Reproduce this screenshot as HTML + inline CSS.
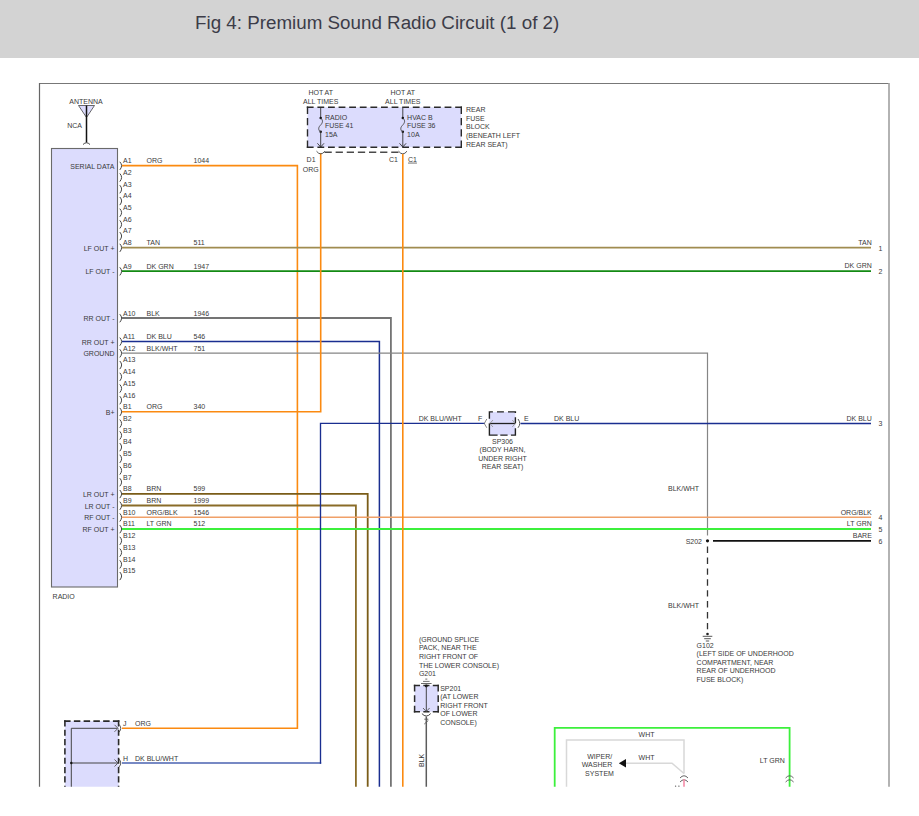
<!DOCTYPE html>
<html><head><meta charset="utf-8"><style>
html,body{margin:0;padding:0;background:#fff;width:919px;height:816px;overflow:hidden}
#hdr{position:absolute;left:0;top:0;width:919px;height:58px;background:#d3d3d3}
#hdr span{position:absolute;left:195px;top:12px;font-family:"Liberation Sans",sans-serif;font-size:18.8px;color:#3c3c48;white-space:nowrap}
svg{position:absolute;left:0;top:0}
text{font-family:"Liberation Sans",sans-serif}
</style></head><body>
<div id="hdr"><span>Fig 4: Premium Sound Radio Circuit (1 of 2)</span></div>
<svg width="919" height="816" viewBox="0 0 919 816">
<defs><clipPath id="c"><rect x="0" y="60" width="919" height="726.8"/></clipPath></defs>
<g clip-path="url(#c)">
<line x1="39.5" y1="83.5" x2="889.0" y2="83.5" stroke="#777" stroke-width="1.2" />
<line x1="39.5" y1="83.0" x2="39.5" y2="787.0" stroke="#666" stroke-width="1.2" />
<line x1="889.0" y1="82.9" x2="889.0" y2="787.0" stroke="#a6a6a6" stroke-width="1.7" />
<text x="86.0" y="104.0" text-anchor="middle" font-size="7" fill="#3a3a3a" >ANTENNA</text>
<text x="82.0" y="127.6" text-anchor="end" font-size="7" fill="#3a3a3a" >NCA</text>
<path d="M78.5,105.5 L94.5,105.5 L86.5,117.5 Z" stroke="#444" stroke-width="0.8" fill="#dcdcfd" />
<line x1="86.5" y1="105.5" x2="86.5" y2="142.5" stroke="#111" stroke-width="1.5" />
<path d="M83,144.5 Q86.5,141 90,144.5" stroke="#333" stroke-width="0.9" fill="none" />
<rect x="51.5" y="148.5" width="66" height="438.5" fill="#dcdcfd" stroke="#6a6a6a" stroke-width="1.1"/>
<text x="52.6" y="598.6" text-anchor="start" font-size="7" fill="#3a3a3a" >RADIO</text>
<path d="M119.8,161.8 Q123.4,165.6 119.8,169.9" stroke="#444" stroke-width="1.0" fill="none" />
<text x="123.0" y="163.1" text-anchor="start" font-size="7" fill="#3a3a3a" >A1</text>
<text x="114.5" y="168.6" text-anchor="end" font-size="7" fill="#3a3a3a" >SERIAL DATA</text>
<path d="M119.8,173.5 Q123.4,177.3 119.8,181.6" stroke="#444" stroke-width="1.0" fill="none" />
<text x="123.0" y="174.8" text-anchor="start" font-size="7" fill="#3a3a3a" >A2</text>
<path d="M119.8,185.2 Q123.4,189.0 119.8,193.3" stroke="#444" stroke-width="1.0" fill="none" />
<text x="123.0" y="186.5" text-anchor="start" font-size="7" fill="#3a3a3a" >A3</text>
<path d="M119.8,197.0 Q123.4,200.8 119.8,205.1" stroke="#444" stroke-width="1.0" fill="none" />
<text x="123.0" y="198.3" text-anchor="start" font-size="7" fill="#3a3a3a" >A4</text>
<path d="M119.8,208.7 Q123.4,212.5 119.8,216.8" stroke="#444" stroke-width="1.0" fill="none" />
<text x="123.0" y="210.0" text-anchor="start" font-size="7" fill="#3a3a3a" >A5</text>
<path d="M119.8,220.4 Q123.4,224.2 119.8,228.5" stroke="#444" stroke-width="1.0" fill="none" />
<text x="123.0" y="221.7" text-anchor="start" font-size="7" fill="#3a3a3a" >A6</text>
<path d="M119.8,232.1 Q123.4,235.9 119.8,240.2" stroke="#444" stroke-width="1.0" fill="none" />
<text x="123.0" y="233.4" text-anchor="start" font-size="7" fill="#3a3a3a" >A7</text>
<path d="M119.8,243.8 Q123.4,247.6 119.8,251.9" stroke="#444" stroke-width="1.0" fill="none" />
<text x="123.0" y="245.1" text-anchor="start" font-size="7" fill="#3a3a3a" >A8</text>
<text x="114.5" y="250.6" text-anchor="end" font-size="7" fill="#3a3a3a" >LF OUT +</text>
<path d="M119.8,267.3 Q123.4,271.1 119.8,275.4" stroke="#444" stroke-width="1.0" fill="none" />
<text x="123.0" y="268.6" text-anchor="start" font-size="7" fill="#3a3a3a" >A9</text>
<text x="114.5" y="274.1" text-anchor="end" font-size="7" fill="#3a3a3a" >LF OUT -</text>
<path d="M119.8,314.2 Q123.4,318.0 119.8,322.3" stroke="#444" stroke-width="1.0" fill="none" />
<text x="123.0" y="315.5" text-anchor="start" font-size="7" fill="#3a3a3a" >A10</text>
<text x="114.5" y="321.0" text-anchor="end" font-size="7" fill="#3a3a3a" >RR OUT -</text>
<path d="M119.8,337.6 Q123.4,341.4 119.8,345.7" stroke="#444" stroke-width="1.0" fill="none" />
<text x="123.0" y="338.9" text-anchor="start" font-size="7" fill="#3a3a3a" >A11</text>
<text x="114.5" y="345.0" text-anchor="end" font-size="7" fill="#3a3a3a" >RR OUT +</text>
<path d="M119.8,349.3 Q123.4,353.1 119.8,357.4" stroke="#444" stroke-width="1.0" fill="none" />
<text x="123.0" y="350.6" text-anchor="start" font-size="7" fill="#3a3a3a" >A12</text>
<text x="114.5" y="356.1" text-anchor="end" font-size="7" fill="#3a3a3a" >GROUND</text>
<path d="M119.8,361.0 Q123.4,364.8 119.8,369.1" stroke="#444" stroke-width="1.0" fill="none" />
<text x="123.0" y="362.3" text-anchor="start" font-size="7" fill="#3a3a3a" >A13</text>
<path d="M119.8,372.8 Q123.4,376.6 119.8,380.9" stroke="#444" stroke-width="1.0" fill="none" />
<text x="123.0" y="374.1" text-anchor="start" font-size="7" fill="#3a3a3a" >A14</text>
<path d="M119.8,384.5 Q123.4,388.3 119.8,392.6" stroke="#444" stroke-width="1.0" fill="none" />
<text x="123.0" y="385.8" text-anchor="start" font-size="7" fill="#3a3a3a" >A15</text>
<path d="M119.8,396.2 Q123.4,400.0 119.8,404.3" stroke="#444" stroke-width="1.0" fill="none" />
<text x="123.0" y="397.5" text-anchor="start" font-size="7" fill="#3a3a3a" >A16</text>
<path d="M119.8,407.9 Q123.4,411.7 119.8,416.0" stroke="#444" stroke-width="1.0" fill="none" />
<text x="123.0" y="409.2" text-anchor="start" font-size="7" fill="#3a3a3a" >B1</text>
<text x="114.5" y="414.7" text-anchor="end" font-size="7" fill="#3a3a3a" >B+</text>
<path d="M119.8,419.6 Q123.4,423.4 119.8,427.7" stroke="#444" stroke-width="1.0" fill="none" />
<text x="123.0" y="420.9" text-anchor="start" font-size="7" fill="#3a3a3a" >B2</text>
<path d="M119.8,431.4 Q123.4,435.2 119.8,439.5" stroke="#444" stroke-width="1.0" fill="none" />
<text x="123.0" y="432.7" text-anchor="start" font-size="7" fill="#3a3a3a" >B3</text>
<path d="M119.8,443.1 Q123.4,446.9 119.8,451.2" stroke="#444" stroke-width="1.0" fill="none" />
<text x="123.0" y="444.4" text-anchor="start" font-size="7" fill="#3a3a3a" >B4</text>
<path d="M119.8,454.8 Q123.4,458.6 119.8,462.9" stroke="#444" stroke-width="1.0" fill="none" />
<text x="123.0" y="456.1" text-anchor="start" font-size="7" fill="#3a3a3a" >B5</text>
<path d="M119.8,466.5 Q123.4,470.3 119.8,474.6" stroke="#444" stroke-width="1.0" fill="none" />
<text x="123.0" y="467.8" text-anchor="start" font-size="7" fill="#3a3a3a" >B6</text>
<path d="M119.8,478.2 Q123.4,482.0 119.8,486.3" stroke="#444" stroke-width="1.0" fill="none" />
<text x="123.0" y="479.5" text-anchor="start" font-size="7" fill="#3a3a3a" >B7</text>
<path d="M119.8,490.0 Q123.4,493.8 119.8,498.1" stroke="#444" stroke-width="1.0" fill="none" />
<text x="123.0" y="491.3" text-anchor="start" font-size="7" fill="#3a3a3a" >B8</text>
<text x="114.5" y="496.8" text-anchor="end" font-size="7" fill="#3a3a3a" >LR OUT +</text>
<path d="M119.8,501.7 Q123.4,505.5 119.8,509.8" stroke="#444" stroke-width="1.0" fill="none" />
<text x="123.0" y="503.0" text-anchor="start" font-size="7" fill="#3a3a3a" >B9</text>
<text x="114.5" y="508.5" text-anchor="end" font-size="7" fill="#3a3a3a" >LR OUT -</text>
<path d="M119.8,513.4 Q123.4,517.2 119.8,521.5" stroke="#444" stroke-width="1.0" fill="none" />
<text x="123.0" y="514.7" text-anchor="start" font-size="7" fill="#3a3a3a" >B10</text>
<text x="114.5" y="520.2" text-anchor="end" font-size="7" fill="#3a3a3a" >RF OUT -</text>
<path d="M119.8,525.1 Q123.4,528.9 119.8,533.2" stroke="#444" stroke-width="1.0" fill="none" />
<text x="123.0" y="526.4" text-anchor="start" font-size="7" fill="#3a3a3a" >B11</text>
<text x="114.5" y="531.9" text-anchor="end" font-size="7" fill="#3a3a3a" >RF OUT +</text>
<path d="M119.8,536.8 Q123.4,540.6 119.8,544.9" stroke="#444" stroke-width="1.0" fill="none" />
<text x="123.0" y="538.1" text-anchor="start" font-size="7" fill="#3a3a3a" >B12</text>
<path d="M119.8,548.6 Q123.4,552.4 119.8,556.7" stroke="#444" stroke-width="1.0" fill="none" />
<text x="123.0" y="549.9" text-anchor="start" font-size="7" fill="#3a3a3a" >B13</text>
<path d="M119.8,560.3 Q123.4,564.1 119.8,568.4" stroke="#444" stroke-width="1.0" fill="none" />
<text x="123.0" y="561.6" text-anchor="start" font-size="7" fill="#3a3a3a" >B14</text>
<path d="M119.8,572.0 Q123.4,575.8 119.8,580.1" stroke="#444" stroke-width="1.0" fill="none" />
<text x="123.0" y="573.3" text-anchor="start" font-size="7" fill="#3a3a3a" >B15</text>
<text x="146.5" y="163.1" text-anchor="start" font-size="7" fill="#3a3a3a" >ORG</text>
<text x="193.5" y="163.1" text-anchor="start" font-size="7" fill="#3a3a3a" >1044</text>
<text x="146.5" y="245.1" text-anchor="start" font-size="7" fill="#3a3a3a" >TAN</text>
<text x="193.5" y="245.1" text-anchor="start" font-size="7" fill="#3a3a3a" >511</text>
<text x="146.5" y="268.6" text-anchor="start" font-size="7" fill="#3a3a3a" >DK GRN</text>
<text x="193.5" y="268.6" text-anchor="start" font-size="7" fill="#3a3a3a" >1947</text>
<text x="146.5" y="315.5" text-anchor="start" font-size="7" fill="#3a3a3a" >BLK</text>
<text x="193.5" y="315.5" text-anchor="start" font-size="7" fill="#3a3a3a" >1946</text>
<text x="146.5" y="338.9" text-anchor="start" font-size="7" fill="#3a3a3a" >DK BLU</text>
<text x="193.5" y="338.9" text-anchor="start" font-size="7" fill="#3a3a3a" >546</text>
<text x="146.5" y="350.6" text-anchor="start" font-size="7" fill="#3a3a3a" >BLK/WHT</text>
<text x="193.5" y="350.6" text-anchor="start" font-size="7" fill="#3a3a3a" >751</text>
<text x="146.5" y="409.2" text-anchor="start" font-size="7" fill="#3a3a3a" >ORG</text>
<text x="193.5" y="409.2" text-anchor="start" font-size="7" fill="#3a3a3a" >340</text>
<text x="146.5" y="491.3" text-anchor="start" font-size="7" fill="#3a3a3a" >BRN</text>
<text x="193.5" y="491.3" text-anchor="start" font-size="7" fill="#3a3a3a" >599</text>
<text x="146.5" y="503.0" text-anchor="start" font-size="7" fill="#3a3a3a" >BRN</text>
<text x="193.5" y="503.0" text-anchor="start" font-size="7" fill="#3a3a3a" >1999</text>
<text x="146.5" y="514.7" text-anchor="start" font-size="7" fill="#3a3a3a" >ORG/BLK</text>
<text x="193.5" y="514.7" text-anchor="start" font-size="7" fill="#3a3a3a" >1546</text>
<text x="146.5" y="526.4" text-anchor="start" font-size="7" fill="#3a3a3a" >LT GRN</text>
<text x="193.5" y="526.4" text-anchor="start" font-size="7" fill="#3a3a3a" >512</text>
<path d="M122,165.6 H297.4 V728.3 H122" stroke="#fb8a10" stroke-width="1.6" fill="none" />
<line x1="122.0" y1="247.6" x2="871.0" y2="247.6" stroke="#a08c50" stroke-width="1.6" />
<line x1="122.0" y1="271.1" x2="871.0" y2="271.1" stroke="#138a13" stroke-width="1.8" />
<path d="M122,318.0 H390.9 V787" stroke="#747474" stroke-width="1.8" fill="none" />
<path d="M122,341.4 H379.4 V787" stroke="#1a2e90" stroke-width="1.5" fill="none" />
<path d="M122,353.1 H707.5 V535.5" stroke="#858585" stroke-width="1.2" fill="none" />
<path d="M122,411.7 H320.7 V153" stroke="#fb8a10" stroke-width="1.6" fill="none" />
<path d="M122,493.8 H367.7 V787" stroke="#7a5c18" stroke-width="1.8" fill="none" />
<path d="M122,505.5 H355.9 V787" stroke="#8a6c28" stroke-width="1.8" fill="none" />
<line x1="122.0" y1="517.2" x2="871.0" y2="517.2" stroke="#f0a068" stroke-width="1.5" />
<line x1="122.0" y1="528.9" x2="871.0" y2="528.9" stroke="#3cf03c" stroke-width="2" />
<line x1="713.0" y1="540.8" x2="871.0" y2="540.8" stroke="#111" stroke-width="1.8" />
<circle cx="707.5" cy="540.8" r="1.6" fill="#111"/>
<text x="702.0" y="543.5" text-anchor="end" font-size="7" fill="#3a3a3a" >S202</text>
<text x="668.0" y="490.6" text-anchor="start" font-size="7" fill="#3a3a3a" >BLK/WHT</text>
<text x="668.0" y="607.9" text-anchor="start" font-size="7" fill="#3a3a3a" >BLK/WHT</text>
<line x1="707.5" y1="546.6" x2="707.5" y2="630.0" stroke="#333" stroke-width="1.3" stroke-dasharray="6.4 4.5"/>
<circle cx="707.5" cy="634" r="1.3" fill="#222"/>
<line x1="702.7" y1="636.3" x2="712.3" y2="636.3" stroke="#444" stroke-width="0.9" />
<line x1="704.2" y1="638.7" x2="710.8" y2="638.7" stroke="#444" stroke-width="0.9" />
<line x1="705.8" y1="641.0" x2="709.2" y2="641.0" stroke="#444" stroke-width="0.9" />
<text x="696.6" y="647.6" text-anchor="start" font-size="7" fill="#3a3a3a" >G102</text>
<text x="696.6" y="656.1" text-anchor="start" font-size="7" fill="#3a3a3a" >(LEFT SIDE OF UNDERHOOD</text>
<text x="696.6" y="664.6" text-anchor="start" font-size="7" fill="#3a3a3a" >COMPARTMENT, NEAR</text>
<text x="696.6" y="673.1" text-anchor="start" font-size="7" fill="#3a3a3a" >REAR OF UNDERHOOD</text>
<text x="696.6" y="681.6" text-anchor="start" font-size="7" fill="#3a3a3a" >FUSE BLOCK)</text>
<text x="871.8" y="244.9" text-anchor="end" font-size="7" fill="#3a3a3a" >TAN</text>
<text x="878.5" y="250.6" text-anchor="start" font-size="7" fill="#3a3a3a" >1</text>
<text x="871.8" y="268.4" text-anchor="end" font-size="7" fill="#3a3a3a" >DK GRN</text>
<text x="878.5" y="274.1" text-anchor="start" font-size="7" fill="#3a3a3a" >2</text>
<text x="871.8" y="420.6" text-anchor="end" font-size="7" fill="#3a3a3a" >DK BLU</text>
<text x="878.5" y="426.3" text-anchor="start" font-size="7" fill="#3a3a3a" >3</text>
<text x="871.8" y="514.5" text-anchor="end" font-size="7" fill="#3a3a3a" >ORG/BLK</text>
<text x="878.5" y="520.2" text-anchor="start" font-size="7" fill="#3a3a3a" >4</text>
<text x="871.8" y="526.2" text-anchor="end" font-size="7" fill="#3a3a3a" >LT GRN</text>
<text x="878.5" y="531.9" text-anchor="start" font-size="7" fill="#3a3a3a" >5</text>
<text x="871.8" y="538.1" text-anchor="end" font-size="7" fill="#3a3a3a" >BARE</text>
<text x="878.5" y="543.8" text-anchor="start" font-size="7" fill="#3a3a3a" >6</text>
<line x1="122.0" y1="763.0" x2="321.2" y2="763.0" stroke="#4a62b0" stroke-width="1.6" />
<path d="M320.5,763.8 V423.4 H485" stroke="#1a2e90" stroke-width="1.35" fill="none" />
<line x1="520.5" y1="423.4" x2="871.0" y2="423.4" stroke="#1a2e90" stroke-width="1.5" />
<text x="418.7" y="420.5" text-anchor="start" font-size="7" fill="#3a3a3a" >DK BLU/WHT</text>
<text x="554.0" y="420.5" text-anchor="start" font-size="7" fill="#3a3a3a" >DK BLU</text>
<text x="477.9" y="420.5" text-anchor="start" font-size="7" fill="#3a3a3a" >F</text>
<text x="524.0" y="420.5" text-anchor="start" font-size="7" fill="#3a3a3a" >E</text>
<rect x="489.4" y="411.9" width="26" height="23.2" fill="#dcdcfd"/>
<path d="M488.7,411.9H492.9M497,411.9H503.9M508,411.9H516.1M515.4,411.2V413M515.4,417.3V423.3M515.4,428.3V435.8M488.7,435.1H497.6M500.3,435.1H507.6M510.9,435.1H516.1M489.4,411.2V418.8M489.4,423.3V435.8" stroke="#222" stroke-width="1.4" fill="none"/>
<line x1="489.4" y1="423.5" x2="515.4" y2="423.5" stroke="#222" stroke-width="1.3" />
<path d="M493,420 L489.8,423.5 L493,427" stroke="#999" stroke-width="0.9" fill="none" />
<path d="M512.3,420 L515.2,423.5 L512.3,427" stroke="#999" stroke-width="0.9" fill="none" />
<path d="M486.8,419 L484.3,423.5 L486.8,427.8" stroke="#888" stroke-width="1.0" fill="none" />
<path d="M518,419 Q521.5,423.5 518,427.8" stroke="#555" stroke-width="1.0" fill="none" />
<text x="502.5" y="443.5" text-anchor="middle" font-size="7" fill="#3a3a3a" >SP306</text>
<text x="502.5" y="452.1" text-anchor="middle" font-size="7" fill="#3a3a3a" >(BODY HARN,</text>
<text x="502.5" y="460.7" text-anchor="middle" font-size="7" fill="#3a3a3a" >UNDER RIGHT</text>
<text x="502.5" y="469.3" text-anchor="middle" font-size="7" fill="#3a3a3a" >REAR SEAT)</text>
<rect x="307.5" y="107.3" width="153.8" height="39.9" fill="#dcdcfd"/>
<path d="M306.80,107.30L313.61,107.30M317.40,107.30L324.21,107.30M328.00,107.30L334.81,107.30M338.60,107.30L345.41,107.30M349.20,107.30L356.01,107.30M359.80,107.30L366.60,107.30M370.40,107.30L377.20,107.30M381.00,107.30L387.80,107.30M391.60,107.30L398.40,107.30M402.20,107.30L409.00,107.30M412.79,107.30L419.60,107.30M423.39,107.30L430.20,107.30M433.99,107.30L440.80,107.30M444.59,107.30L451.40,107.30M455.19,107.30L462.00,107.30" stroke="#2a2a2a" stroke-width="1.4" fill="none" stroke-linecap="butt"/>
<path d="M307.50,106.60L307.50,113.88M307.50,117.94L307.50,125.22M307.50,129.28L307.50,136.56M307.50,140.62L307.50,147.90" stroke="#2a2a2a" stroke-width="1.4" fill="none" stroke-linecap="butt"/>
<path d="M461.30,106.60L461.30,113.88M461.30,117.94L461.30,125.22M461.30,129.28L461.30,136.56M461.30,140.62L461.30,147.90" stroke="#2a2a2a" stroke-width="1.4" fill="none" stroke-linecap="butt"/>
<path d="M306.80,147.20L313.61,147.20M317.40,147.20L324.21,147.20M328.00,147.20L334.81,147.20M338.60,147.20L345.41,147.20M349.20,147.20L356.01,147.20M359.80,147.20L366.60,147.20M370.40,147.20L377.20,147.20M381.00,147.20L387.80,147.20M391.60,147.20L398.40,147.20M402.20,147.20L409.00,147.20M412.79,147.20L419.60,147.20M423.39,147.20L430.20,147.20M433.99,147.20L440.80,147.20M444.59,147.20L451.40,147.20M455.19,147.20L462.00,147.20" stroke="#2a2a2a" stroke-width="1.4" fill="none" stroke-linecap="butt"/>
<path d="M324.50,152.20L331.78,152.20M335.62,152.20L342.90,152.20M346.74,152.20L354.02,152.20M357.86,152.20L365.14,152.20M368.98,152.20L376.26,152.20M380.10,152.20L387.38,152.20M391.22,152.20L398.50,152.20" stroke="#4a4a4a" stroke-width="1.6" fill="none" stroke-linecap="butt"/>
<text x="320.7" y="94.9" text-anchor="middle" font-size="7" fill="#3a3a3a" >HOT AT</text>
<text x="320.7" y="103.7" text-anchor="middle" font-size="7" fill="#3a3a3a" >ALL TIMES</text>
<line x1="320.7" y1="107.5" x2="320.7" y2="118.0" stroke="#333" stroke-width="0.9" />
<circle cx="320.7" cy="118" r="1.25" fill="#111"/>
<circle cx="320.7" cy="131.8" r="1.25" fill="#111"/>
<path d="M320.7,118 C323.5,120.5 322.7,123 320.2,125.5 C317.7,128 318.7,131 320.7,131.8" stroke="#444" stroke-width="0.9" fill="none" />
<line x1="320.7" y1="131.8" x2="320.7" y2="147.0" stroke="#333" stroke-width="0.9" />
<path d="M317.4,143.3 L320.7,147 L324.0,143.3" stroke="#333" stroke-width="0.9" fill="none" />
<path d="M316.5,151.2 Q320.7,156.6 324.9,151.2" stroke="#555" stroke-width="1.0" fill="none" />
<text x="325.0" y="119.7" text-anchor="start" font-size="7" fill="#3a3a3a" >RADIO</text>
<text x="325.0" y="128.2" text-anchor="start" font-size="7" fill="#3a3a3a" >FUSE 41</text>
<text x="325.0" y="136.6" text-anchor="start" font-size="7" fill="#3a3a3a" >15A</text>
<text x="402.8" y="94.9" text-anchor="middle" font-size="7" fill="#3a3a3a" >HOT AT</text>
<text x="402.8" y="103.7" text-anchor="middle" font-size="7" fill="#3a3a3a" >ALL TIMES</text>
<line x1="402.8" y1="107.5" x2="402.8" y2="118.0" stroke="#333" stroke-width="0.9" />
<circle cx="402.8" cy="118" r="1.25" fill="#111"/>
<circle cx="402.8" cy="131.8" r="1.25" fill="#111"/>
<path d="M402.8,118 C405.6,120.5 404.8,123 402.3,125.5 C399.8,128 400.8,131 402.8,131.8" stroke="#444" stroke-width="0.9" fill="none" />
<line x1="402.8" y1="131.8" x2="402.8" y2="147.0" stroke="#333" stroke-width="0.9" />
<path d="M399.5,143.3 L402.8,147 L406.1,143.3" stroke="#333" stroke-width="0.9" fill="none" />
<path d="M398.6,151.2 Q402.8,156.6 407.0,151.2" stroke="#555" stroke-width="1.0" fill="none" />
<text x="407.1" y="119.7" text-anchor="start" font-size="7" fill="#3a3a3a" >HVAC B</text>
<text x="407.1" y="128.2" text-anchor="start" font-size="7" fill="#3a3a3a" >FUSE 36</text>
<text x="407.1" y="136.6" text-anchor="start" font-size="7" fill="#3a3a3a" >10A</text>
<line x1="402.8" y1="154.0" x2="402.8" y2="787.0" stroke="#fb8a10" stroke-width="1.6" />
<text x="306.6" y="161.9" text-anchor="start" font-size="7" fill="#3a3a3a" >D1</text>
<text x="302.7" y="171.6" text-anchor="start" font-size="7" fill="#3a3a3a" >ORG</text>
<text x="389.0" y="161.7" text-anchor="start" font-size="7" fill="#3a3a3a" >C1</text>
<text x="408.0" y="161.7" text-anchor="start" font-size="7" fill="#3a3a3a" text-decoration="underline">C1</text>
<text x="466.0" y="112.0" text-anchor="start" font-size="7" fill="#3a3a3a" >REAR</text>
<text x="466.0" y="120.7" text-anchor="start" font-size="7" fill="#3a3a3a" >FUSE</text>
<text x="466.0" y="129.3" text-anchor="start" font-size="7" fill="#3a3a3a" >BLOCK</text>
<text x="466.0" y="137.9" text-anchor="start" font-size="7" fill="#3a3a3a" >(BENEATH LEFT</text>
<text x="466.0" y="146.6" text-anchor="start" font-size="7" fill="#3a3a3a" >REAR SEAT)</text>
<text x="418.9" y="641.9" text-anchor="start" font-size="7" fill="#3a3a3a" >(GROUND SPLICE</text>
<text x="418.9" y="650.4" text-anchor="start" font-size="7" fill="#3a3a3a" >PACK, NEAR THE</text>
<text x="418.9" y="659.0" text-anchor="start" font-size="7" fill="#3a3a3a" >RIGHT FRONT OF</text>
<text x="418.9" y="667.5" text-anchor="start" font-size="7" fill="#3a3a3a" >THE LOWER CONSOLE)</text>
<text x="418.9" y="676.1" text-anchor="start" font-size="7" fill="#3a3a3a" >G201</text>
<line x1="425.3" y1="679.1" x2="427.3" y2="679.1" stroke="#444" stroke-width="0.8" />
<line x1="423.0" y1="681.4" x2="429.6" y2="681.4" stroke="#555" stroke-width="0.8" />
<line x1="421.0" y1="683.5" x2="431.6" y2="683.5" stroke="#444" stroke-width="0.8" />
<rect x="414.6" y="685.5" width="23.6" height="26.2" fill="#dcdcfd"/>
<path d="M413.85,685.50L420.01,685.50M423.32,685.50L429.48,685.50M432.79,685.50L438.95,685.50" stroke="#2a2a2a" stroke-width="1.5" fill="none" stroke-linecap="butt"/>
<path d="M414.60,684.75L414.60,691.54M414.60,695.20L414.60,702.00M414.60,705.66L414.60,712.45" stroke="#2a2a2a" stroke-width="1.5" fill="none" stroke-linecap="butt"/>
<path d="M438.20,684.75L438.20,691.54M438.20,695.20L438.20,702.00M438.20,705.66L438.20,712.45" stroke="#2a2a2a" stroke-width="1.5" fill="none" stroke-linecap="butt"/>
<path d="M413.85,711.70L420.01,711.70M423.32,711.70L429.48,711.70M432.79,711.70L438.95,711.70" stroke="#2a2a2a" stroke-width="1.5" fill="none" stroke-linecap="butt"/>
<circle cx="426.3" cy="686" r="1.4" fill="#111"/>
<line x1="426.3" y1="686.0" x2="426.3" y2="711.5" stroke="#333" stroke-width="0.9" />
<path d="M423,708 L426.3,711.5 L429.6,708" stroke="#555" stroke-width="0.9" fill="none" />
<path d="M421.9,713.6 Q426.3,718.5 430.7,713.6" stroke="#444" stroke-width="1.0" fill="none" />
<path d="M424.3,719.2 H428.3 M424.3,724 L428.3,720.5" stroke="#555" stroke-width="0.9" fill="none" />
<line x1="426.3" y1="716.5" x2="426.3" y2="787.0" stroke="#5c5c5c" stroke-width="1.5" />
<text x="424.3" y="767" font-size="7" fill="#333" transform="rotate(-90 424.3 767)">BLK</text>
<text x="440.2" y="690.8" text-anchor="start" font-size="7" fill="#3a3a3a" >SP201</text>
<text x="440.2" y="699.2" text-anchor="start" font-size="7" fill="#3a3a3a" >(AT LOWER</text>
<text x="440.2" y="707.7" text-anchor="start" font-size="7" fill="#3a3a3a" >RIGHT FRONT</text>
<text x="440.2" y="716.1" text-anchor="start" font-size="7" fill="#3a3a3a" >OF LOWER</text>
<text x="440.2" y="724.6" text-anchor="start" font-size="7" fill="#3a3a3a" >CONSOLE)</text>
<rect x="64.9" y="721.1" width="53.7" height="70" fill="#dcdcfd"/>
<path d="M64.10,721.10L70.58,721.10M73.86,721.10L80.34,721.10M83.63,721.10L90.11,721.10M93.39,721.10L99.87,721.10M103.16,721.10L109.64,721.10M112.92,721.10L119.40,721.10" stroke="#2a2a2a" stroke-width="1.6" fill="none" stroke-linecap="butt"/>
<path d="M64.90,720.30L64.90,726.50M64.90,729.64L64.90,735.84M64.90,738.99L64.90,745.18M64.90,748.33L64.90,754.53M64.90,757.67L64.90,763.87M64.90,767.02L64.90,773.21M64.90,776.36L64.90,782.56M64.90,785.70L64.90,791.90" stroke="#2a2a2a" stroke-width="1.6" fill="none" stroke-linecap="butt"/>
<path d="M118.60,720.30L118.60,726.50M118.60,729.64L118.60,735.84M118.60,738.99L118.60,745.18M118.60,748.33L118.60,754.53M118.60,757.67L118.60,763.87M118.60,767.02L118.60,773.21M118.60,776.36L118.60,782.56M118.60,785.70L118.60,791.90" stroke="#2a2a2a" stroke-width="1.6" fill="none" stroke-linecap="butt"/>
<path d="M64.10,791.10L70.58,791.10M73.86,791.10L80.34,791.10M83.63,791.10L90.11,791.10M93.39,791.10L99.87,791.10M103.16,791.10L109.64,791.10M112.92,791.10L119.40,791.10" stroke="#2a2a2a" stroke-width="1.6" fill="none" stroke-linecap="butt"/>
<path d="M71.3,787 V728.3 H117.5" stroke="#444" stroke-width="1" fill="none" />
<line x1="71.3" y1="763.0" x2="117.5" y2="763.0" stroke="#444" stroke-width="1" />
<circle cx="71.3" cy="763" r="1.2" fill="#111"/>
<path d="M114.5,724.8 L118,728.3 L114.5,731.8" stroke="#555" stroke-width="0.9" fill="none" />
<path d="M119,724.3 Q122.5,728.3 119,732.3" stroke="#444" stroke-width="0.9" fill="none" />
<path d="M114.5,759.5 L118,763 L114.5,766.5" stroke="#555" stroke-width="0.9" fill="none" />
<path d="M119,759 Q122.5,763 119,767" stroke="#444" stroke-width="0.9" fill="none" />
<text x="123.0" y="725.7" text-anchor="start" font-size="7" fill="#3a3a3a" >J</text>
<text x="135.0" y="725.7" text-anchor="start" font-size="7" fill="#3a3a3a" >ORG</text>
<text x="123.0" y="760.7" text-anchor="start" font-size="7" fill="#3a3a3a" >H</text>
<text x="135.0" y="760.7" text-anchor="start" font-size="7" fill="#3a3a3a" >DK BLU/WHT</text>
<path d="M554.7,787 V727.8 H789.6 V787" stroke="#3cf03c" stroke-width="1.8" fill="none" />
<path d="M566.5,787 V740 H684 V773.5" stroke="#d8d8d8" stroke-width="1.5" fill="none" />
<path d="M625,763.2 H672 L684,773.5" stroke="#d8d8d8" stroke-width="1.5" fill="none" />
<path d="M618.8,763.2 L626,759 L626,767.4 Z" stroke="#111" stroke-width="0" fill="#111" />
<text x="646.6" y="736.9" text-anchor="middle" font-size="7" fill="#3a3a3a" >WHT</text>
<text x="646.6" y="760.4" text-anchor="middle" font-size="7" fill="#3a3a3a" >WHT</text>
<text x="599.7" y="758.8" text-anchor="middle" font-size="7" fill="#3a3a3a" >WIPER/</text>
<text x="597.0" y="766.7" text-anchor="middle" font-size="7" fill="#3a3a3a" >WASHER</text>
<text x="599.5" y="776.2" text-anchor="middle" font-size="7" fill="#3a3a3a" >SYSTEM</text>
<text x="784.9" y="762.7" text-anchor="end" font-size="7" fill="#3a3a3a" >LT GRN</text>
<path d="M680,778 Q684,773.5 688,778" stroke="#555" stroke-width="0.9" fill="none" />
<path d="M680,782 Q684,777.5 688,782" stroke="#555" stroke-width="0.9" fill="none" />
<path d="M785.6,778 Q789.6,773.5 793.6,778" stroke="#555" stroke-width="0.9" fill="none" />
<path d="M785.6,782 Q789.6,777.5 793.6,782" stroke="#555" stroke-width="0.9" fill="none" />
<line x1="684.0" y1="779.0" x2="684.0" y2="787.0" stroke="#f48ca8" stroke-width="1.6" />
<circle cx="675.6" cy="786.2" r="0.7" fill="#555"/><circle cx="678.9" cy="786.2" r="0.7" fill="#555"/>
</g>
</svg>
</body></html>
